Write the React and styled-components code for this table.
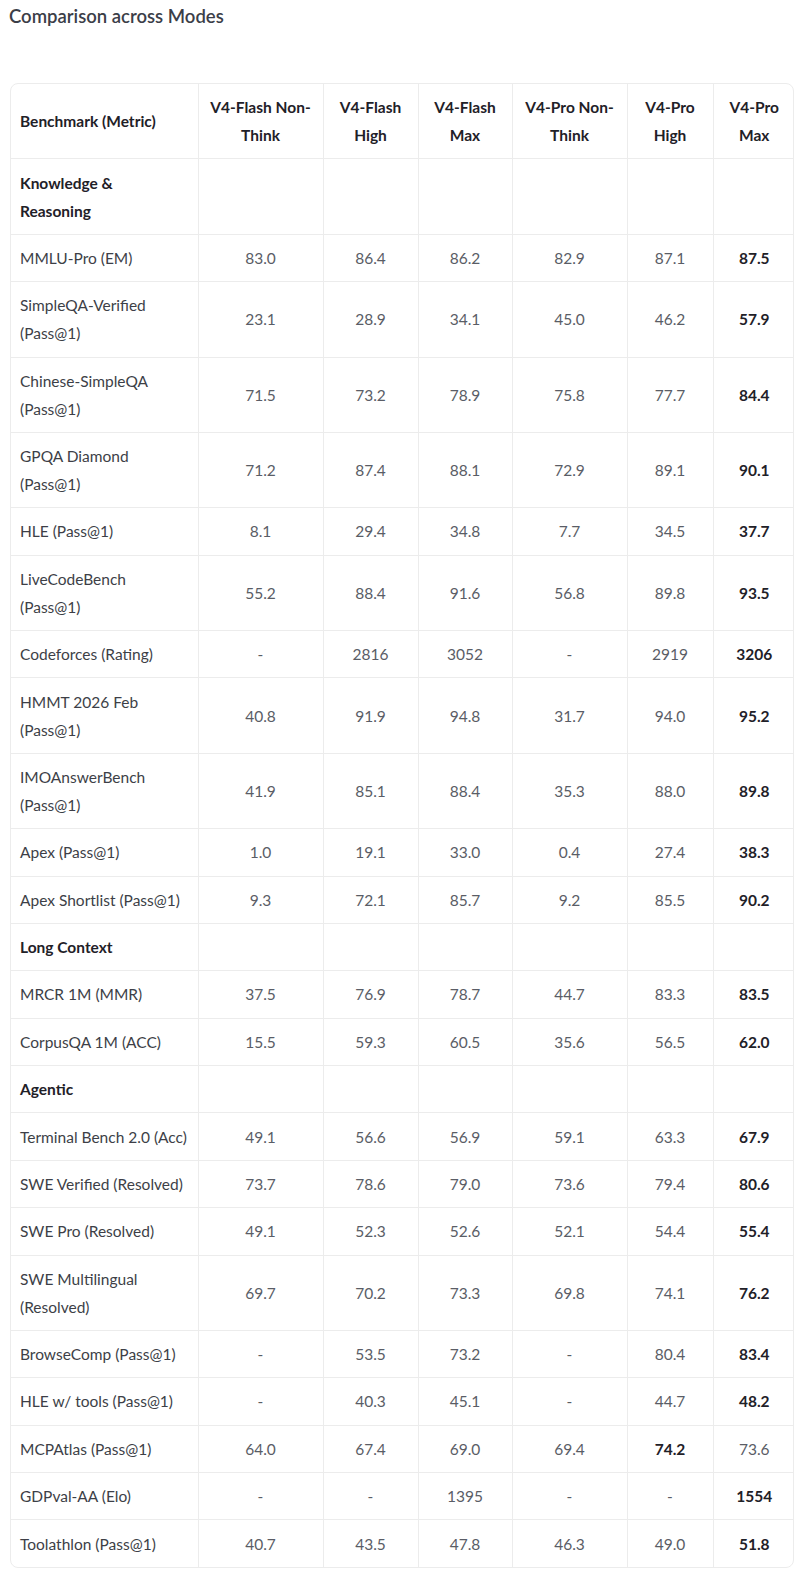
import styled, { createGlobalStyle } from "styled-components";

const GlobalStyle = createGlobalStyle`
  body {
    margin: 0;
    background: #ffffff;
    font-family: Lato, "Noto Sans", sans-serif;
  }
`;

const Page = styled.div`
  padding: 2px 7px 0 10px;
`;

const Title = styled.h3`
  margin: 0 0 0 -1px;
  font-size: 18.5px;
  line-height: 28px;
  font-weight: 600;
  color: #3b3e48;
`;

const TableFrame = styled.div`
  margin-top: 53px;
  width: 784px;
  border: 1px solid #ececec;
  border-radius: 8px;
  overflow: hidden;
  box-sizing: border-box;
`;

const Table = styled.table`
  width: 100%;
  border-collapse: collapse;
  table-layout: fixed;
  font-size: 15.5px;
  line-height: 28px;
`;

const Cell = styled.td`
  padding: ${(p) => (p.$first ? "9.2px 10px 9.2px 9px" : "9.2px 9px")};
  border: 1px solid #ececec;
  text-align: ${(p) => (p.$first ? "left" : "center")};
  color: ${(p) => (p.$bold ? "#1f2128" : p.$first ? "#3d3f47" : "#5a5d66")};
  font-weight: ${(p) => (p.$bold ? 700 : 400)};
  vertical-align: middle;

  thead tr:first-child > & {
    border-top: none;
  }
  tbody tr:last-child > & {
    border-bottom: none;
  }
  &:first-child {
    border-left: none;
  }
  &:last-child {
    border-right: none;
  }
`;

const Head = styled(Cell).attrs({ as: "th" })`
  font-weight: 700;
  color: #1f2128;
`;

const SectionLabel = styled.span`
  display: block;
  max-width: 150px;
`;

const widths = [187, 125, 95, 94, 115, 86, 82];

const headers = [
  "Benchmark (Metric)",
  "V4-Flash Non-Think",
  "V4-Flash High",
  "V4-Flash Max",
  "V4-Pro Non-Think",
  "V4-Pro High",
  "V4-Pro Max",
];

// "*" in front of a value marks the best score of the row
const rows = [
  { section: "Knowledge & Reasoning" },
  ["MMLU-Pro (EM)", "83.0", "86.4", "86.2", "82.9", "87.1", "*87.5"],
  ["SimpleQA-Verified (Pass@1)", "23.1", "28.9", "34.1", "45.0", "46.2", "*57.9"],
  ["Chinese-SimpleQA (Pass@1)", "71.5", "73.2", "78.9", "75.8", "77.7", "*84.4"],
  ["GPQA Diamond (Pass@1)", "71.2", "87.4", "88.1", "72.9", "89.1", "*90.1"],
  ["HLE (Pass@1)", "8.1", "29.4", "34.8", "7.7", "34.5", "*37.7"],
  ["LiveCodeBench (Pass@1)", "55.2", "88.4", "91.6", "56.8", "89.8", "*93.5"],
  ["Codeforces (Rating)", "-", "2816", "3052", "-", "2919", "*3206"],
  ["HMMT 2026 Feb (Pass@1)", "40.8", "91.9", "94.8", "31.7", "94.0", "*95.2"],
  ["IMOAnswerBench (Pass@1)", "41.9", "85.1", "88.4", "35.3", "88.0", "*89.8"],
  ["Apex (Pass@1)", "1.0", "19.1", "33.0", "0.4", "27.4", "*38.3"],
  ["Apex Shortlist (Pass@1)", "9.3", "72.1", "85.7", "9.2", "85.5", "*90.2"],
  { section: "Long Context" },
  ["MRCR 1M (MMR)", "37.5", "76.9", "78.7", "44.7", "83.3", "*83.5"],
  ["CorpusQA 1M (ACC)", "15.5", "59.3", "60.5", "35.6", "56.5", "*62.0"],
  { section: "Agentic" },
  ["Terminal Bench 2.0 (Acc)", "49.1", "56.6", "56.9", "59.1", "63.3", "*67.9"],
  ["SWE Verified (Resolved)", "73.7", "78.6", "79.0", "73.6", "79.4", "*80.6"],
  ["SWE Pro (Resolved)", "49.1", "52.3", "52.6", "52.1", "54.4", "*55.4"],
  ["SWE Multilingual (Resolved)", "69.7", "70.2", "73.3", "69.8", "74.1", "*76.2"],
  ["BrowseComp (Pass@1)", "-", "53.5", "73.2", "-", "80.4", "*83.4"],
  ["HLE w/ tools (Pass@1)", "-", "40.3", "45.1", "-", "44.7", "*48.2"],
  ["MCPAtlas (Pass@1)", "64.0", "67.4", "69.0", "69.4", "*74.2", "73.6"],
  ["GDPval-AA (Elo)", "-", "-", "1395", "-", "-", "*1554"],
  ["Toolathlon (Pass@1)", "40.7", "43.5", "47.8", "46.3", "49.0", "*51.8"],
];

const App = () => {
  return (
    <>
      <GlobalStyle />
      <Page>
        <Title>Comparison across Modes</Title>
        <TableFrame>
          <Table>
            <colgroup>
              {widths.map((w, i) => (
                <col key={i} style={{ width: w }} />
              ))}
            </colgroup>
            <thead>
              <tr>
                {headers.map((h, i) => (
                  <Head key={h} $first={i === 0}>
                    {h}
                  </Head>
                ))}
              </tr>
            </thead>
            <tbody>
              {rows.map((row, r) => {
                if (row.section) {
                  return (
                    <tr key={r}>
                      <Cell $first $bold>
                        <SectionLabel>{row.section}</SectionLabel>
                      </Cell>
                      {widths.slice(1).map((_, i) => (
                        <Cell key={i} />
                      ))}
                    </tr>
                  );
                }
                return (
                  <tr key={r}>
                    {row.map((v, i) => {
                      const bold = v.startsWith("*");
                      return (
                        <Cell key={i} $first={i === 0} $bold={bold}>
                          {bold ? v.slice(1) : v}
                        </Cell>
                      );
                    })}
                  </tr>
                );
              })}
            </tbody>
          </Table>
        </TableFrame>
      </Page>
    </>
  );
};

export default App;
